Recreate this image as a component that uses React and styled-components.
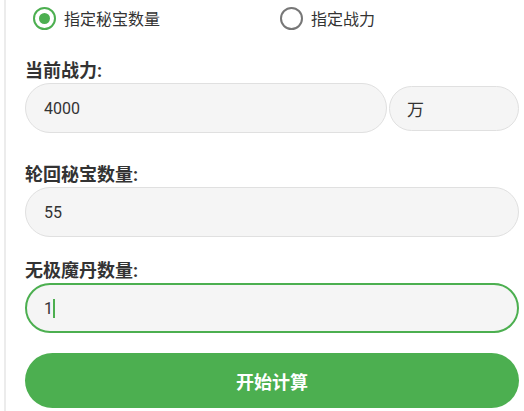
import React from "react";
import styled, { createGlobalStyle } from "styled-components";

const FONT = `Roboto, "Noto Sans CJK SC", "Noto Sans", sans-serif`;

const Global = createGlobalStyle`
  html, body { margin: 0; padding: 0; background: #fff; }
  body { font-family: ${FONT}; color: #333; }
  * { box-sizing: border-box; }
`;

const Frame = styled.div`
  margin-left: 4px;
  border-left: 2px solid #ececec;
  min-height: 411px;
  padding: 0 5px 0 19px;
`;

const RadioRow = styled.div`
  display: grid;
  grid-template-columns: 1fr 1fr;
  height: 36px;
  align-items: center;
`;

const RadioLabel = styled.label`
  display: flex;
  align-items: center;
  gap: 8px;
  padding-left: 8px;
  font-size: 16px;
  color: #333;
`;

const RadioCircle = styled.span`
  width: 23px;
  height: 23px;
  border-radius: 50%;
  border: 2px solid ${(p) => (p.$checked ? "#4caf50" : "#777")};
  display: flex;
  align-items: center;
  justify-content: center;
  &::after {
    content: "";
    width: 11px;
    height: 11px;
    border-radius: 50%;
    background: ${(p) => (p.$checked ? "#4caf50" : "transparent")};
  }
`;

const Group = styled.div`
  margin-top: ${(p) => p.$top}px;
`;

const Label = styled.div`
  font-size: 18px;
  font-weight: 700;
  line-height: 24px;
  color: #333;
`;

const InputRow = styled.div`
  display: flex;
  align-items: center;
  gap: 2px;
`;

const Field = styled.div`
  position: relative;
  flex: 1;
  min-width: 0;
`;

const Input = styled.input`
  display: block;
  width: 100%;
  height: 50px;
  border-radius: 25px;
  border: ${(p) => (p.$focused ? "2px solid #4caf50" : "1px solid #e0e0e0")};
  background: #f5f5f5;
  padding: 0 ${(p) => (p.$focused ? 17 : 18)}px;
  font-family: ${FONT};
  font-size: 16px;
  color: #333;
  outline: none;
  caret-color: transparent;
`;

const Caret = styled.span`
  position: absolute;
  left: 28px;
  top: 16px;
  width: 2px;
  height: 19px;
  background: #4caf50;
`;

const Unit = styled.div`
  width: 130px;
  height: 45px;
  border-radius: 23px;
  border: 1px solid #e0e0e0;
  background: #f5f5f5;
  display: flex;
  align-items: center;
  padding-left: 17px;
  font-size: 17px;
  color: #333;
`;

const Button = styled.button`
  display: block;
  width: 100%;
  height: 55px;
  margin-top: 20px;
  border: none;
  border-radius: 28px;
  background: #4caf50;
  color: #fff;
  font-family: ${FONT};
  font-size: 18px;
  font-weight: 700;
`;

export default function App() {
  return (
    <>
      <Global />
      <Frame>
        <RadioRow>
          <RadioLabel>
            <RadioCircle $checked />
            指定秘宝数量
          </RadioLabel>
          <RadioLabel>
            <RadioCircle />
            指定战力
          </RadioLabel>
        </RadioRow>
        <Group $top={23}>
          <Label>当前战力:</Label>
          <InputRow>
            <Field>
              <Input defaultValue="4000" />
            </Field>
            <Unit>万</Unit>
          </InputRow>
        </Group>
        <Group $top={30}>
          <Label>轮回秘宝数量:</Label>
          <Field>
            <Input defaultValue="55" />
          </Field>
        </Group>
        <Group $top={22}>
          <Label>无极魔丹数量:</Label>
          <Field>
            <Input $focused defaultValue="1" />
            <Caret />
          </Field>
        </Group>
        <Button>开始计算</Button>
      </Frame>
    </>
  );
}
